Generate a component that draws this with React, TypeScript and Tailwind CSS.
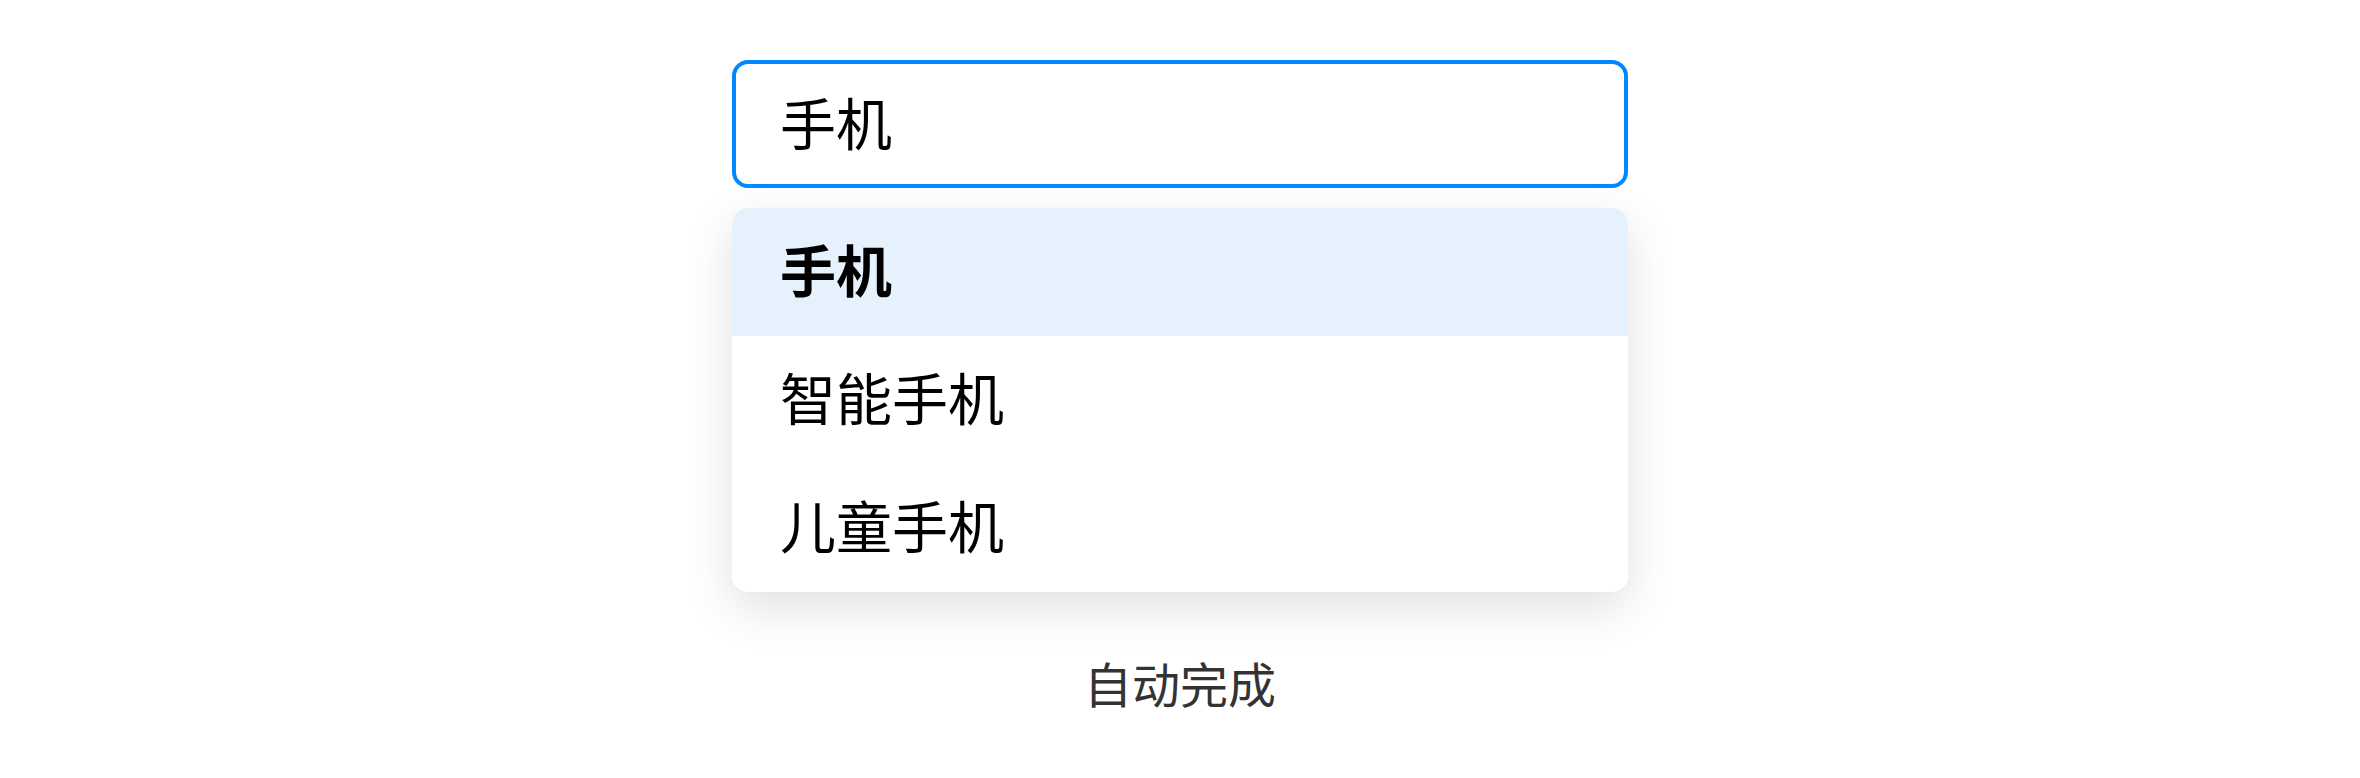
import { useState } from "react";

const suggestions = ["手机", "智能手机", "儿童手机"];

export default function App() {
  const [value, setValue] = useState("手机");
  const active = 0;

  return (
    <div
      className="min-h-[778px] w-full bg-white flex flex-col items-center pt-[60px]"
      style={{ fontFamily: '"Noto Sans CJK SC", "Noto Sans", sans-serif' }}
    >
      <div className="w-[896px]">
        <input
          value={value}
          onChange={(e) => setValue(e.target.value)}
          className="w-full h-[128px] rounded-[16px] border-4 border-[#0088ff] pl-[44px] pr-[44px] pb-[8px] text-[56px] text-black outline-none bg-white"
        />

        {/* suggestion list */}
        <ul className="mt-[20px] rounded-[16px] bg-white overflow-hidden shadow-[0_16px_48px_rgba(0,0,0,0.12)]">
          {suggestions.map((s, i) => (
            <li
              key={s}
              className={[
                "h-[128px] flex items-center px-[48px] pb-[8px] text-[56px] text-black leading-none",
                i === active ? "bg-[#e5f2fe] font-bold" : "bg-white",
              ].join(" ")}
            >
              {s}
            </li>
          ))}
        </ul>
      </div>

      <p className="mt-[58px] text-[48px] leading-[64px] text-[#333]">自动完成</p>
    </div>
  );
}
